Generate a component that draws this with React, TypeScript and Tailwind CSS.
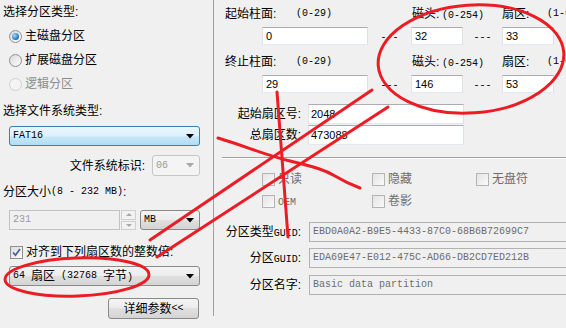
import React from 'react';

const cjk = "font-['Liberation_Sans','Noto_Sans_CJK_SC',sans-serif] text-[12px] leading-none";
const mono = "font-['Liberation_Mono','Noto_Sans_CJK_SC',monospace] text-[10px]";
const btnGrad = "bg-[linear-gradient(to_bottom,#f4f4f4_0%,#ececec_50%,#e0e0e0_50%,#d4d4d4_100%)] border border-[#8a8a8a] rounded-[3px]";
const hotGrad = "bg-[linear-gradient(to_bottom,#eaf6fd_0%,#dcf1fc_50%,#c6e7f9_55%,#b3dcf3_100%)] border border-[#3c7fb1] rounded-[3px]";
const field = "bg-white border border-[#abadb3] border-l-[#e2e3ea] border-r-[#dbdfe6] border-b-[#e3e9ef]";
const offField = "bg-[#f0f0f0] border border-[#b2b2b2]";

const M: React.FC<{ children: React.ReactNode }> = ({ children }) => <span className={mono}>{children}</span>;

const Arrow = ({ gray = false }: { gray?: boolean }) => (
    <svg width="8" height="5" viewBox="0 0 8 5" className="shrink-0">
        <path d="M0 0 H8 L4 4.5 Z" fill={gray ? '#a8a8a8' : '#000'} />
    </svg>
);

const Radio = ({ checked = false, disabled = false }: { checked?: boolean; disabled?: boolean }) => (
    <span
        className={`w-[13px] h-[13px] rounded-full border flex items-center justify-center shrink-0 ${disabled ? 'border-[#cfcfcf] bg-[#f4f4f4]' : 'border-[#8e8f8f] bg-[linear-gradient(135deg,#dcdcdc,#fbfbfb)]'}`}
    >
        {checked && <span className="w-[7px] h-[7px] rounded-full bg-[radial-gradient(circle_at_35%_35%,#9fdcfb,#1e6fc0_70%,#0d4f9a)]" />}
    </span>
);

const Check = ({ checked = false, disabled = false }: { checked?: boolean; disabled?: boolean }) => (
    <span
        className={`w-[13px] h-[13px] border flex items-center justify-center shrink-0 ${disabled ? 'border-[#b4b4b4] bg-[linear-gradient(135deg,#e4e4e4,#fafafa)]' : 'border-[#8e8f8f] bg-[linear-gradient(135deg,#dcdcdc,#fbfbfb)]'}`}
    >
        {checked && (
            <svg width="9" height="9" viewBox="0 0 9 9">
                <path d="M1 4.5 L3.5 7.2 L8 1" stroke="#4a5d96" strokeWidth="1.7" fill="none" />
            </svg>
        )}
    </span>
);

const RadioRow = ({ label, checked, disabled }: { label: string; checked?: boolean; disabled?: boolean }) => (
    <div className="h-[24px] flex items-center pl-[9px] gap-[3px]">
        <Radio checked={checked} disabled={disabled} />
        <span className={disabled ? 'text-[#8d8d8d]' : ''}>{label}</span>
    </div>
);

const CheckItem = ({ label, w }: { label: React.ReactNode; w: string }) => (
    <div className={`flex items-center gap-[3px] text-[#6d6d6d] ${w}`}>
        <Check disabled />
        <span>{label}</span>
    </div>
);

const App: React.FC = () => {
    return (
        <div className={`relative w-[566px] h-[328px] overflow-hidden bg-[#f0f0f0] text-black flex ${cjk}`}>

            {/* 左侧：分区类型 / 文件系统 / 大小 */}
            <div className="w-[213px] shrink-0 flex flex-col whitespace-nowrap">
                <div className="h-[24px] flex items-center pl-[3px]">选择分区类型:</div>
                <RadioRow label="主磁盘分区" checked />
                <RadioRow label="扩展磁盘分区" />
                <RadioRow label="逻辑分区" disabled />

                <div className="mt-[3px] h-[24px] flex items-center pl-[3px]">选择文件系统类型:</div>
                <div className={`mt-[3px] ml-[9px] w-[191px] h-[20px] flex items-center justify-between pl-[3px] pr-[5px] ${hotGrad}`}>
                    <M>FAT16</M>
                    <Arrow />
                </div>

                <div className="mt-[9px] h-[21px] flex items-center justify-end pr-[13px] gap-[7px]">
                    <span>文件系统标识:</span>
                    <div className="w-[48px] h-[21px] flex items-center justify-between pl-[3px] pr-[5px] border border-[#c4c6c8] rounded-[3px] bg-[#f4f4f4] text-[#9a9a9a]">
                        <M>06</M>
                        <Arrow gray />
                    </div>
                </div>

                <div className="mt-[6px] h-[20px] flex items-center pl-[3px]">
                    分区大小<M>(8 - 232 MB)</M>:
                </div>

                <div className="mt-[8px] h-[20px] flex items-center pl-[9px]">
                    <div className={`w-[111px] h-[20px] flex items-center pl-[3px] text-[#9a9a9a] ${offField} border-[#c2c2c2]`}>
                        <M>231</M>
                    </div>
                    <div className="ml-[1px] w-[15px] h-[20px] flex flex-col gap-[1px]">
                        <div className="flex-1 border border-[#cfcfcf] bg-[#f2f2f2] flex items-center justify-center">
                            <svg width="6" height="3" viewBox="0 0 6 3"><path d="M0 3 H6 L3 0 Z" fill="#a8a8a8" /></svg>
                        </div>
                        <div className="flex-1 border border-[#cfcfcf] bg-[#f2f2f2] flex items-center justify-center">
                            <svg width="6" height="3" viewBox="0 0 6 3"><path d="M0 0 H6 L3 3 Z" fill="#a8a8a8" /></svg>
                        </div>
                    </div>
                    <div className={`ml-[4px] w-[60px] h-[20px] flex items-center justify-between pl-[3px] pr-[5px] ${btnGrad}`}>
                        <M>MB</M>
                        <Arrow />
                    </div>
                </div>

                <div className="mt-[12px] h-[20px] flex items-center pl-[10px] gap-[3px]">
                    <Check checked />
                    <span>对齐到下列扇区数的整数倍:</span>
                </div>

                <div className={`mt-[4px] ml-[9px] w-[191px] h-[20px] flex items-center justify-between pl-[3px] pr-[5px] ${btnGrad}`}>
                    <span className="flex items-center gap-[6px]">
                        <M>64</M>
                        <span>扇区</span>
                        <M>(32768</M>
                        <span>字节<M>)</M></span>
                    </span>
                    <Arrow />
                </div>

                <div className="mt-[12px] flex justify-end pr-[14px]">
                    <button className={`w-[91px] h-[21px] flex items-center justify-center ${btnGrad}`}>
                        详细参数<M>&lt;&lt;</M>
                    </button>
                </div>
            </div>

            {/* 右侧：详细参数 */}
            <div className="flex-1 h-[316px] border-l border-[#a0a0a0] flex flex-col whitespace-nowrap">
                <div className="mt-[4px] h-[20px] flex items-center">
                    <div className="w-[198px] pl-[11px] flex items-center">
                        <span className="w-[71px]">起始柱面:</span>
                        <M>(0-29)</M>
                    </div>
                    <span className="w-[30px]">磁头:</span>
                    <span className="w-[60px]"><M>(0-254)</M></span>
                    <span className="w-[45px]">扇区:</span>
                    <M>(1-63)</M>
                </div>
                <div className="mt-[3px] h-[18px] flex items-center">
                    <div className={`ml-[48px] w-[106px] h-[18px] flex items-center pl-[3px] text-[11px] ${field}`}>0</div>
                    <div className="w-[43px] text-center"><M>---</M></div>
                    <div className={`w-[52px] h-[18px] flex items-center pl-[3px] text-[11px] ${field}`}>32</div>
                    <div className="w-[39px] text-center"><M>---</M></div>
                    <div className={`w-[52px] h-[18px] flex items-center pl-[3px] text-[11px] ${field}`}>33</div>
                </div>

                <div className="mt-[7px] h-[20px] flex items-center">
                    <div className="w-[198px] pl-[11px] flex items-center">
                        <span className="w-[71px]">终止柱面:</span>
                        <M>(0-29)</M>
                    </div>
                    <span className="w-[30px]">磁头:</span>
                    <span className="w-[60px]"><M>(0-254)</M></span>
                    <span className="w-[45px]">扇区:</span>
                    <M>(1-63)</M>
                </div>
                <div className="mt-[3px] h-[18px] flex items-center">
                    <div className={`ml-[48px] w-[106px] h-[18px] flex items-center pl-[3px] text-[11px] ${field}`}>29</div>
                    <div className="w-[43px] text-center"><M>---</M></div>
                    <div className={`w-[52px] h-[18px] flex items-center pl-[3px] text-[11px] ${field}`}>146</div>
                    <div className="w-[39px] text-center"><M>---</M></div>
                    <div className={`w-[52px] h-[18px] flex items-center pl-[3px] text-[11px] ${field}`}>53</div>
                </div>

                <div className="mt-[11px] h-[20px] flex items-center gap-[7px]">
                    <span className="w-[87px] text-right">起始扇区号:</span>
                    <div className={`w-[156px] h-[20px] flex items-center pl-[2px] text-[11px] ${field}`}>2048</div>
                </div>
                <div className="mt-[1px] h-[20px] flex items-center gap-[7px]">
                    <span className="w-[87px] text-right">总扇区数:</span>
                    <div className={`w-[156px] h-[20px] flex items-center pl-[2px] text-[11px] ${field}`}>473088</div>
                </div>

                <div className="mt-[12px] ml-[8px] border-t border-[#a0a0a0] border-b border-b-white" />

                <div className="mt-[10px] h-[20px] flex items-center pl-[48px]">
                    <CheckItem label="只读" w="w-[110px]" />
                    <CheckItem label="隐藏" w="w-[104px]" />
                    <CheckItem label="无盘符" w="" />
                </div>
                <div className="mt-[2px] h-[20px] flex items-center pl-[48px]">
                    <CheckItem label={<M>OEM</M>} w="w-[110px]" />
                    <CheckItem label="卷影" w="w-[104px]" />
                </div>

                <div className="mt-[11px] h-[20px] flex items-center gap-[8px]">
                    <span className="w-[87px] text-right">分区类型<M>GUID</M>:</span>
                    <div className={`w-[270px] h-[20px] flex items-center pl-[3px] text-[#6d6d6d] ${offField}`}>
                        <M>EBD0A0A2-B9E5-4433-87C0-68B6B72699C7</M>
                    </div>
                </div>
                <div className="mt-[6px] h-[20px] flex items-center gap-[8px]">
                    <span className="w-[87px] text-right">分区<M>GUID</M>:</span>
                    <div className={`w-[270px] h-[20px] flex items-center pl-[3px] text-[#6d6d6d] ${offField}`}>
                        <M>EDA69E47-E012-475C-AD66-DB2CD7ED212B</M>
                    </div>
                </div>
                <div className="mt-[7px] h-[20px] flex items-center gap-[8px]">
                    <span className="w-[87px] text-right">分区名字:</span>
                    <div className={`w-[270px] h-[20px] flex items-center pl-[3px] text-[#6d6d6d] ${offField}`}>
                        <M>Basic data partition</M>
                    </div>
                </div>
            </div>

            {/* 红色手绘标注 */}
            <svg className="absolute inset-0 pointer-events-none" width="566" height="328" viewBox="0 0 566 328">
                <g fill="none" stroke="#ec1c24" strokeWidth="3" strokeLinecap="round">
                    <ellipse cx="471" cy="59" rx="93" ry="54" transform="rotate(-4 471 59)" />
                    <ellipse cx="77" cy="277" rx="72" ry="19" transform="rotate(-2 77 277)" />
                    <line x1="150" y1="240" x2="372" y2="90" />
                    <line x1="157" y1="257" x2="388" y2="107" />
                    <line x1="277" y1="92" x2="288" y2="237" />
                    <path d="M218 138 C245 146 265 155 290 161 S325 170 335 176 S352 185 360 188" />
                </g>
            </svg>
        </div>
    );
};

export default App;
